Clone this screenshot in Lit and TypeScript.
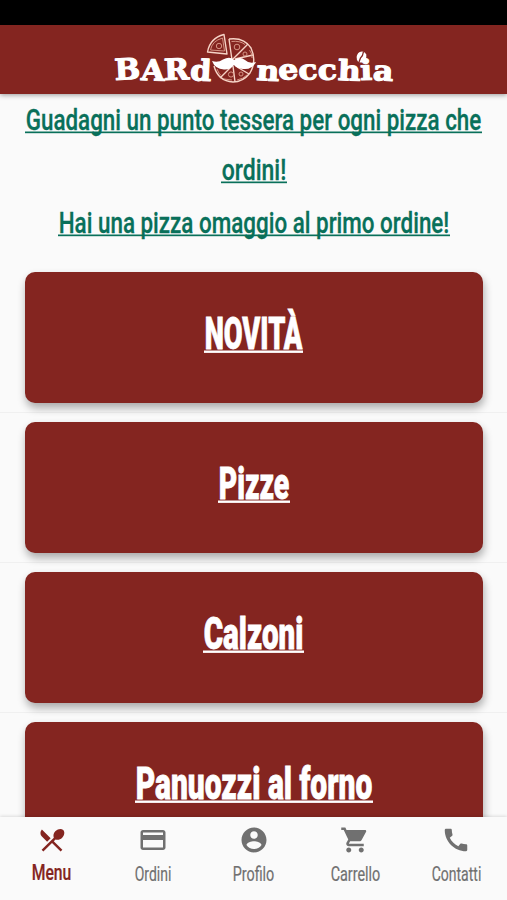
import { LitElement, html, css, svg } from "lit";
import { customElement, property } from "lit/decorators.js";

/** A single line of condensed text, fitted to a given width and optionally underlined. */
@customElement("condensed-line")
class CondensedLine extends LitElement {
  @property() text = "";
  @property({ type: Number }) width = 100;
  @property({ type: Number }) size = 20;
  @property({ type: Number }) weight = 500;
  @property({ type: Number }) rule = 0;
  @property({ type: Number }) stroke = 0;

  static styles = css`
    :host { display: block; line-height: 0; }
    svg { display: block; overflow: visible; margin: 0 -4px -12px; }
    text { font-family: Roboto, "Liberation Sans", sans-serif; fill: currentColor; stroke: currentColor; }
    rect { fill: currentColor; }
  `;

  render() {
    const base = Math.round(this.size * 0.8);
    return html`<svg width=${this.width + 8} height=${base + 12}>
      <text x="4.7" y=${base} font-size=${this.size} font-weight=${this.weight} stroke-width=${this.stroke}
        textLength=${this.width - 1.4} lengthAdjust="spacingAndGlyphs">${this.text}</text>
      ${this.rule ? svg`<rect x="4" y=${base + 1.5} width=${this.width} height=${this.rule}></rect>` : ""}
    </svg>`;
  }
}

@customElement("brand-logo")
class BrandLogo extends LitElement {
  static styles = css`
    :host { display: block; }
    svg { display: block; overflow: visible; }
    text { font-family: "DejaVu Serif", serif; font-weight: 700; fill: #fff; stroke: #fff; stroke-width: 1.1; stroke-linejoin: round; }
    .line { fill: none; stroke: #f6d3c6; stroke-width: 1.4; stroke-linejoin: round; }
    .thin { fill: none; stroke: #dc9e8d; stroke-width: 0.9; }
    .white { fill: #fff; }
    .seam { fill: none; stroke: #842520; stroke-width: 1.3; }
  `;

  render() {
    return html`<svg width="282" height="54" viewBox="114 32 282 54">
      <text x="116" y="80" font-size="29" rotate="-3 2 -2 3" textLength="96" lengthAdjust="spacingAndGlyphs">BARd</text>
      <text x="257" y="80" font-size="28" rotate="3 -5 -4 -3 2 -2 3" textLength="137" lengthAdjust="spacingAndGlyphs">necchia</text>
      <g class="line">
        <path d="M225 34.500 L228 54 L208.500 52 Q211 38 225 34.500Z"></path>
        <path d="M230 39 Q245 37 252 48 Q258 61 251 73 Q244 82 234 82 Q219 81 215 66"></path>
        <path d="M230 39 L233 60 L249 44 M236 59 L254 55 M232 67 L221 78 M234 66 L236 82 M238 67 L250 74"></path>
      </g>
      <g class="thin">
        <path d="M223.500 38 L225.500 51 L211.500 50 Q213 41 223.500 38 M232.500 41.500 Q241 40.500 246 44.500 M250.500 50 Q253.500 54 253 58 M218 69 Q220 74 222 75.500 M225 79 L233 80 M238 80 Q244 79 248 75"></path>
        <circle cx="220" cy="46" r="2.700"></circle><circle cx="238" cy="47" r="2.800"></circle>
        <circle cx="246" cy="54" r="2"></circle><circle cx="232" cy="74.500" r="2.600"></circle><circle cx="242" cy="74" r="2"></circle>
      </g>
      <path class="white" d="M213 61 Q219 63 224 59.500 Q231 56 235 60 Q241 56 246 60 Q250 64 257 62 Q253 70 244 69 Q237 68 235 65 Q231 70 225 69.500 Q216 69 213 61Z"></path>
      <ellipse class="white" cx="362.500" cy="57" rx="4.800" ry="5.700" transform="rotate(20 362.500 57)"></ellipse>
      <path class="seam" d="M364.500 51.500 Q364 56 361.500 58 L360 62"></path>
    </svg>`;
  }
}

const CATEGORIES = [
  { name: "NOVITÀ", width: 99 },
  { name: "Pizze", width: 72 },
  { name: "Calzoni", width: 101 },
  { name: "Panuozzi al forno", width: 238 },
];

const TABS = [
  { name: "Menu", width: 41, icon: "M8.1 13.34l2.83-2.83L3.91 3.5c-1.56 1.56-1.56 4.09 0 5.66l4.19 4.18zm6.78-1.81c1.53.71 3.68.21 5.27-1.38 1.91-1.91 2.28-4.65.81-6.12-1.46-1.46-4.2-1.1-6.12.81-1.59 1.59-2.09 3.74-1.38 5.27L3.7 19.87l1.41 1.41L12 14.41l6.88 6.88 1.41-1.41L13.41 13l1.47-1.47z" },
  { name: "Ordini", width: 38, icon: "M20 4H4c-1.11 0-1.99.89-1.99 2L2 18c0 1.11.89 2 2 2h16c1.11 0 2-.89 2-2V6c0-1.11-.89-2-2-2zm0 14H4v-6h16v6zm0-10H4V6h16v2z" },
  { name: "Profilo", width: 43, icon: "M12 2C6.48 2 2 6.48 2 12s4.48 10 10 10 10-4.48 10-10S17.52 2 12 2zm0 3c1.66 0 3 1.34 3 3s-1.34 3-3 3-3-1.34-3-3 1.34-3 3-3zm0 14.2c-2.5 0-4.71-1.28-6-3.22.03-1.99 4-3.08 6-3.08 1.99 0 5.97 1.09 6 3.08-1.29 1.94-3.5 3.22-6 3.22z" },
  { name: "Carrello", width: 51, icon: "M7 18c-1.1 0-1.99.9-1.99 2S5.9 22 7 22s2-.9 2-2-.9-2-2-2zM1 2v2h2L6.600 11.590L5.250 14.040C5.090 14.320 5 14.650 5 15C5 16.100 5.900 17 7 17H19V15H7.420C7.280 15 7.170 14.890 7.170 14.750L7.200 14.630L8.100 13H15.550C16.300 13 16.960 12.590 17.300 11.970L20.880 5.480C20.960 5.340 21 5.170 21 5C21 4.450 20.550 4 20 4H5.210L4.270 2H1zM17 18c-1.100 0-1.990.9-1.990 2s.89 2 1.990 2 2-.9 2-2-.9-2-2-2z" },
  { name: "Contatti", width: 51, icon: "M20.01 15.38c-1.23 0-2.42-.2-3.53-.56-.35-.12-.74-.03-1.01.24l-1.57 1.97c-2.83-1.35-5.48-3.9-6.89-6.83l1.95-1.66c.27-.28.35-.67.24-1.02-.37-1.11-.56-2.3-.56-3.53 0-.54-.45-.99-.99-.99H4.19C3.65 3 3 3.24 3 3.99 3 13.28 10.73 21 20.01 21c.71 0 .99-.63.99-1.18v-3.45c0-.54-.45-.99-.99-.99z" },
];

@customElement("app-root")
class AppRoot extends LitElement {
  static styles = css`
    :host { display: flex; flex-direction: column; height: 900px; overflow: hidden; background: #fafafa; }
    .status { height: 25px; background: #000; flex: none; }
    header { height: 69px; flex: none; background: #842520; display: flex; justify-content: center; padding-top: 7px; box-sizing: border-box; box-shadow: 0 1px 5px rgba(0,0,0,.4); z-index: 1; }
    main { flex: 1; min-height: 0; overflow: hidden; }
    .promo { color: #09705a; height: 169px; padding-top: 12px; box-sizing: border-box; display: flex; flex-direction: column; align-items: center; }
    .promo condensed-line:nth-child(2) { margin-top: 26px; }
    .promo condensed-line:nth-child(3) { margin-top: 28.500px; }
    .row { height: 150px; box-sizing: border-box; padding: 9px 24.500px 0 25px; border-bottom: 1px solid #f0f0f0; }
    .card { height: 131px; box-sizing: border-box; padding-top: 42px; border-radius: 10px; background: #842520; color: #fff; box-shadow: 1px 5px 9px rgba(0,0,0,.32); display: flex; justify-content: center; align-items: flex-start; }
    nav { flex: none; height: 83px; padding-left: 1px; box-sizing: border-box; background: #fafafa; display: grid; grid-template-columns: repeat(5, 1fr); z-index: 1; box-shadow: 0 -1px 3px rgba(0,0,0,.12); }
    .tab { display: flex; flex-direction: column; align-items: center; padding-top: 8px; color: #707070; }
    .tab svg { width: 30px; height: 30px; fill: currentColor; margin-bottom: 10px; }
    .tab.active { color: #842520; }
    .tab.active svg { margin-bottom: 6.500px; }
  `;

  render() {
    return html`
      <div class="status"></div>
      <header><brand-logo></brand-logo></header>
      <main>
        <div class="promo">
          <condensed-line text="Guadagni un punto tessera per ogni pizza che" width="457" size="30" stroke="0.3" rule="1.7"></condensed-line>
          <condensed-line text="ordini!" width="66" size="30" stroke="0.3" rule="1.7"></condensed-line>
          <condensed-line text="Hai una pizza omaggio al primo ordine!" width="392" size="30" stroke="0.3" rule="1.7"></condensed-line>
        </div>
        ${CATEGORIES.map((c) => html`<div class="row"><div class="card">
          <condensed-line text=${c.name} width=${c.width} size="44" weight="900" stroke="0.8" rule="2.4"></condensed-line>
        </div></div>`)}
      </main>
      <nav>
        ${TABS.map((t, i) => html`<div class="tab ${i === 0 ? "active" : ""}">
          <svg viewBox="0 0 24 24"><path d=${t.icon}></path></svg>
          <condensed-line text=${t.name} width=${t.width} size=${i === 0 ? 22.5 : 20} weight=${i === 0 ? 500 : 400} stroke="0.2"></condensed-line>
        </div>`)}
      </nav>`;
  }
}
